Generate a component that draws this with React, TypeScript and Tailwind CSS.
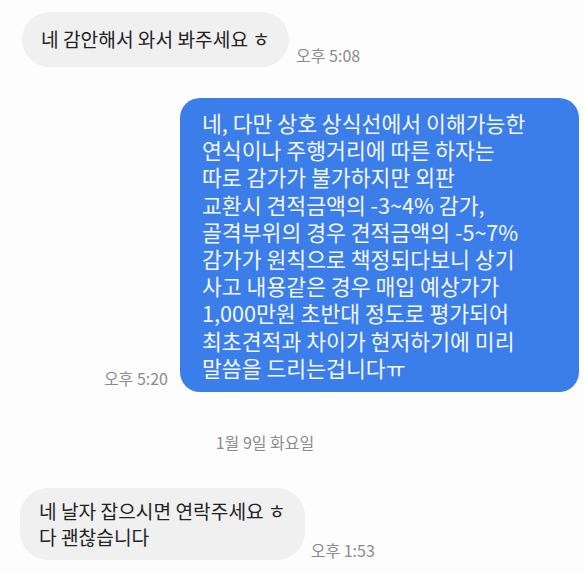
const blueLines = [
  '네, 다만 상호 상식선에서 이해가능한',
  '연식이나 주행거리에 따른 하자는',
  '따로 감가가 불가하지만 외판',
  '교환시 견적금액의 -3~4% 감가,',
  '골격부위의 경우 견적금액의 -5~7%',
  '감가가 원칙으로 책정되다보니 상기',
  '사고 내용같은 경우 매입 예상가가',
  '1,000만원 초반대 정도로 평가되어',
  '최초견적과 차이가 현저하기에 미리',
  '말씀을 드리는겁니다ㅠ',
];

const Time = ({ children, className = '' }: { children: string; className?: string }) => (
  <span className={`text-[16px] leading-[20px] text-[#8b8b8b] whitespace-nowrap ${className}`}>{children}</span>
);

export default function App() {
  return (
    <div className="w-[584px] h-[573px] overflow-hidden bg-[#fdfdfd] font-['Noto_Sans_CJK_KR','Noto_Sans',sans-serif]">
      {/* received */}
      <div className="flex items-end pl-[22px] pt-[12px]">
        <div className="h-[55px] flex items-center px-[19px] rounded-[28px] bg-[#f0f0f0] text-[19.2px] text-[#222] whitespace-nowrap">
          네 감안해서 와서 봐주세요 ㅎ
        </div>
        <Time className="ml-[7px] mb-[2px]">오후 5:08</Time>
      </div>

      {/* sent */}
      <div className="flex items-end justify-end pr-[5px] mt-[31px]">
        <Time className="mr-[12px] mb-[4px]">오후 5:20</Time>
        <div className="w-[399px] pl-[22px] pr-[10px] py-[11px] rounded-[20px] bg-[#3b7eea] text-[21.6px] leading-[27.2px] text-[#f4f7ff]">
          {blueLines.map((line) => (
            <div key={line} className="whitespace-nowrap">{line}</div>
          ))}
        </div>
      </div>

      {/* date divider */}
      <div className="w-[530px] flex justify-center mt-[40px]">
        <span className="text-[16px] leading-[20px] text-[#8b8b8b]">1월 9일 화요일</span>
      </div>

      {/* received */}
      <div className="flex items-end pl-[20px] mt-[36px]">
        <div className="px-[19px] py-[10px] rounded-[28px] bg-[#f0f0f0] text-[19.2px] leading-[26px] text-[#222] whitespace-nowrap">
          <div>네 날자 잡으시면 연락주세요 ㅎ</div>
          <div>다 괜찮습니다</div>
        </div>
        <Time className="ml-[6px]">오후 1:53</Time>
      </div>
    </div>
  );
}
